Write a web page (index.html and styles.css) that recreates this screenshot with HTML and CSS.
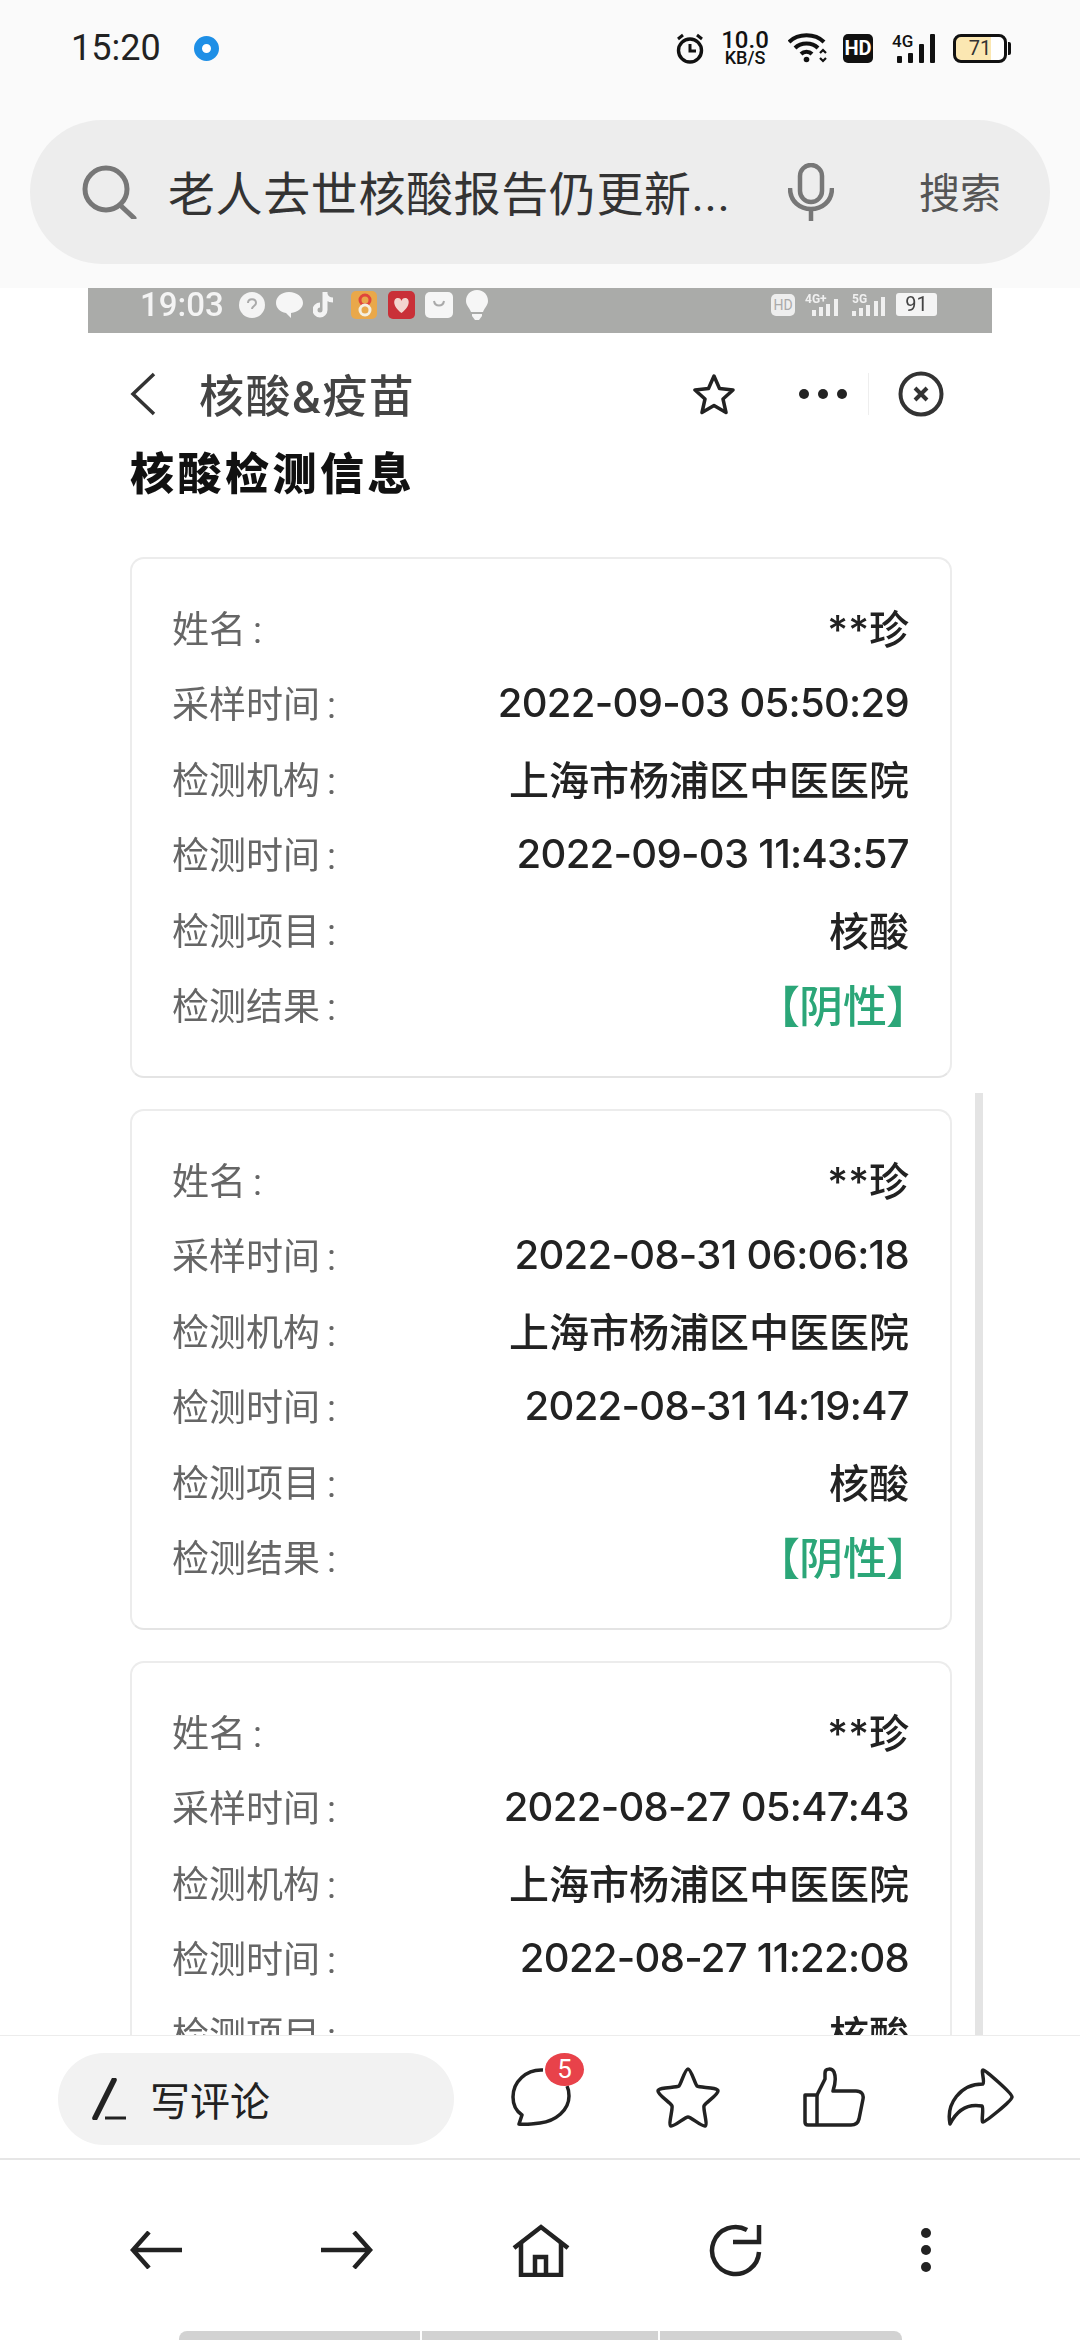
FILE: index.html
```html
<!DOCTYPE html>
<html lang="zh-CN">

<head>
    <meta charset="UTF-8">
    <meta name="viewport" content="width=device-width, initial-scale=1.0">
    <title>老人去世核酸报告仍更新</title>
    <link rel="stylesheet" href="styles.css">
</head>

<body>
    <div id="phone">
        <div class="top">
            <div class="status">
                <div class="status-left">
                    <span class="clock">15:20</span>
                    <span class="live-dot"></span>
                </div>
                <div class="status-right">
                    <svg class="ic-alarm" width="30" height="31" viewBox="0 0 30 31" fill="none" stroke="#111" stroke-width="3.4">
                        <circle cx="15" cy="17.500" r="11.500" />
                        <path d="M15 11v7h6" stroke-width="3" />
                        <path d="M3 6l5-4M27 6l-5-4" stroke-width="3" />
                    </svg>
                    <div class="speed"><b>10.0</b><span>KB/S</span></div>
                    <svg class="ic-wifi" width="40" height="30" viewBox="0 0 40 30" fill="none" stroke="#111" stroke-width="4">
                        <path d="M1 9C10 0 27 0 36 9" />
                        <path d="M7 15C13 9 24 9 30 15" />
                        <path d="M13 21C16 18 21 18 24 21" />
                        <circle cx="18.500" cy="26.500" r="2.800" fill="#111" stroke="none" />
                        <path d="M32 20l3-3 3 3M32 25l3 3 3-3" stroke-width="2.200" />
                    </svg>
                    <div class="hd">HD</div>
                    <div class="signal">
                        <span class="signal-4g">4G</span>
                        <svg width="38" height="29" viewBox="0 0 38 29" fill="#111">
                            <rect x="0" y="22" width="5" height="7" rx="1" />
                            <rect x="11" y="19" width="5" height="10" rx="1" />
                            <rect x="22" y="10" width="5" height="19" rx="1" />
                            <rect x="33" y="0" width="5" height="29" rx="1" />
                        </svg>
                    </div>
                    <div class="battery">
                        <div class="battery-body">71</div>
                        <div class="battery-nub"></div>
                    </div>
                </div>
            </div>
            <div class="searchbar">
                <svg class="ic-search" width="56" height="54" viewBox="0 0 56 54" fill="none" stroke="#777" stroke-width="5">
                    <circle cx="25" cy="24" r="21" />
                    <path d="M39 40l14 13" stroke-linecap="round" />
                </svg>
                <div class="search-text">老人去世核酸报告仍更新...</div>
                <svg class="ic-mic" width="46" height="58" viewBox="0 0 46 58" fill="none" stroke="#777" stroke-width="4.500">
                    <rect x="12" y="2" width="22" height="37" rx="11" />
                    <path d="M2 25C2 53 44 53 44 25" />
                    <path d="M23 45v13" />
                </svg>
                <div class="search-btn">搜索</div>
            </div>
        </div>

        <div class="content">
            <div class="shot">
                <div class="shot-status">
                    <span class="shot-time">19:03</span>
                    <div class="shot-icons">
                        <svg width="28" height="26" viewBox="0 0 28 26"><circle cx="14" cy="13" r="13" fill="#f4f4f4" /><path d="M10 11c0-5 8-5 8 0 0 3-4 3-4 6" fill="none" stroke="#aaa" stroke-width="2" /></svg>
                        <svg width="27" height="26" viewBox="0 0 27 26"><path d="M13 0C5 0 0 5 0 11c0 5 4 9 10 10l5 5v-5c7-1 12-5 12-10C27 5 21 0 13 0z" fill="#f6f6f6" /></svg>
                        <svg width="22" height="26" viewBox="0 0 22 26" fill="none" stroke="#f4f4f4" stroke-width="5"><path d="M12 0v18a5 5 0 1 1-5-5M12 2c1 4 4 6 8 6" /></svg>
                        <svg class="app-orange" width="26" height="28" viewBox="0 0 26 28"><rect width="26" height="28" rx="5" fill="#e9a84a" /><circle cx="14" cy="9" r="5" fill="none" stroke="#e0463c" stroke-width="3" /><circle cx="14" cy="19" r="5" fill="none" stroke="#f4efe0" stroke-width="3" /></svg>
                        <svg class="app-red" width="27" height="28" viewBox="0 0 27 28"><rect width="27" height="28" rx="5" fill="#c93038" /><path d="M13.500 22C4 15 5 7 10 7c2 0 3 1 3.500 3C14 8 15 7 17 7c5 0 6 8-3.500 15z" fill="#f3d5cf" /></svg>
                        <svg class="app-white" width="28" height="26" viewBox="0 0 28 26"><rect width="28" height="26" rx="5" fill="#f6f6f6" /><path d="M9 9c1 6 9 6 10 0" fill="none" stroke="#aaa" stroke-width="2" /></svg>
                        <svg class="app-bulb" width="22" height="30" viewBox="0 0 22 30"><path d="M11 0C4 0 0 5 0 11c0 4 3 6 5 11h12c2-5 5-7 5-11C22 5 18 0 11 0zM6 24h10v2l-3 4H9l-3-4z" fill="#f6f6f6" /></svg>
                    </div>
                    <div class="shot-right">
                        <div class="shot-hd">HD</div>
                        <svg width="37" height="24" viewBox="0 0 37 24" fill="#f0f0f0"><rect x="8" y="17" width="4" height="6" /><rect x="15" y="14" width="4" height="9" /><rect x="22" y="11" width="4" height="12" /><rect x="30" y="6" width="4" height="17" /><text x="1" y="10" font-size="12" font-weight="700">4G+</text></svg>
                        <svg width="37" height="24" viewBox="0 0 37 24" fill="#f0f0f0"><rect x="2" y="18" width="4" height="5" /><rect x="9" y="15" width="4" height="8" /><rect x="16" y="12" width="4" height="11" /><rect x="24" y="8" width="4" height="15" /><rect x="31" y="4" width="4" height="19" /><text x="2" y="10" font-size="12" font-weight="700">5G</text></svg>
                        <div class="shot-batt">91</div>
                    </div>
                </div>

                <div class="nav">
                    <svg class="nav-back" width="26" height="44" viewBox="0 0 26 44" fill="none" stroke="#333" stroke-width="3.500">
                        <path d="M24 2L3 22l21 20" />
                    </svg>
                    <div class="nav-title">核酸&amp;疫苗</div>
                    <svg class="nav-star" width="42" height="42" viewBox="0 0 42 42" fill="none" stroke="#222" stroke-width="3.500" stroke-linejoin="round">
                        <path d="M21 3l5.500 12.500 13.500 1.500-10 9 3 13.500-12-7-12 7 3-13.500-10-9 13.500-1.500z" />
                    </svg>
                    <svg class="nav-more" width="50" height="12" viewBox="0 0 50 12" fill="#222">
                        <circle cx="6" cy="6" r="5" /><circle cx="25" cy="6" r="5" /><circle cx="44" cy="6" r="5" />
                    </svg>
                    <div class="nav-sep"></div>
                    <svg class="nav-close" width="46" height="46" viewBox="0 0 46 46" fill="none" stroke="#333" stroke-width="4">
                        <circle cx="23" cy="23" r="20.500" />
                        <path d="M17 17l12 12M29 17L17 29" />
                    </svg>
                </div>

                <h2 class="page-title">核酸检测信息</h2>

                <div class="card">
                    <div class="row"><span class="label">姓名<i>:</i></span><span class="value">**珍</span></div>
                    <div class="row"><span class="label">采样时间<i>:</i></span><span class="value num">2022-09-03 05:50:29</span></div>
                    <div class="row"><span class="label">检测机构<i>:</i></span><span class="value">上海市杨浦区中医医院</span></div>
                    <div class="row"><span class="label">检测时间<i>:</i></span><span class="value num">2022-09-03 11:43:57</span></div>
                    <div class="row"><span class="label">检测项目<i>:</i></span><span class="value">核酸</span></div>
                    <div class="row"><span class="label">检测结果<i>:</i></span><span class="value negative">【阴性】</span></div>
                </div>

                <div class="card">
                    <div class="row"><span class="label">姓名<i>:</i></span><span class="value">**珍</span></div>
                    <div class="row"><span class="label">采样时间<i>:</i></span><span class="value num">2022-08-31 06:06:18</span></div>
                    <div class="row"><span class="label">检测机构<i>:</i></span><span class="value">上海市杨浦区中医医院</span></div>
                    <div class="row"><span class="label">检测时间<i>:</i></span><span class="value num">2022-08-31 14:19:47</span></div>
                    <div class="row"><span class="label">检测项目<i>:</i></span><span class="value">核酸</span></div>
                    <div class="row"><span class="label">检测结果<i>:</i></span><span class="value negative">【阴性】</span></div>
                </div>

                <div class="card">
                    <div class="row"><span class="label">姓名<i>:</i></span><span class="value">**珍</span></div>
                    <div class="row"><span class="label">采样时间<i>:</i></span><span class="value num">2022-08-27 05:47:43</span></div>
                    <div class="row"><span class="label">检测机构<i>:</i></span><span class="value">上海市杨浦区中医医院</span></div>
                    <div class="row"><span class="label">检测时间<i>:</i></span><span class="value num">2022-08-27 11:22:08</span></div>
                    <div class="row"><span class="label">检测项目<i>:</i></span><span class="value">核酸</span></div>
                    <div class="row"><span class="label">检测结果<i>:</i></span><span class="value negative">【阴性】</span></div>
                </div>

                <div class="shot-scroll"></div>
            </div>
        </div>

        <div class="commentbar">
            <div class="comment-input">
                <svg width="36" height="42" viewBox="0 0 36 42" fill="none" stroke="#222">
                    <path d="M22 2L3 40" stroke-width="5.500" stroke-linecap="round" />
                    <path d="M13 40h21" stroke-width="3" />
                </svg>
                <span>写评论</span>
            </div>
            <div class="comment-icon ic-comment">
                <svg width="60" height="58" viewBox="0 0 60 58" fill="none" stroke="#222" stroke-width="3.500" stroke-linejoin="round">
                    <path d="M32 2C15 1 2 14 2 29c0 7 3 14 9 18l-3 9c6 1 14 0 21-1 16-2 29-13 29-27 0-5-1-8-2-10" />
                </svg>
                <span class="badge">5</span>
            </div>
            <div class="comment-icon ic-fav">
                <svg width="64" height="62" viewBox="0 0 64 62" fill="none" stroke="#222" stroke-width="3.500" stroke-linejoin="round">
                    <path d="M32 3c3 0 7 15 9 17 3 2 21 1 21 5 0 4-13 12-14 15-1 3 4 19 1 20-3 1-14-9-17-9s-14 10-17 9c-3-1 2-17 1-20-1-3-14-11-14-15 0-4 18-3 21-5 2-2 6-17 9-17z" />
                </svg>
            </div>
            <div class="comment-icon ic-like">
                <svg width="62" height="60" viewBox="0 0 62 60" fill="none" stroke="#222" stroke-width="3.500" stroke-linejoin="round">
                    <path d="M2 28H14L22 12V6C22 1 29 1 31 5 33 10 32 18 30 24H53C58 24 61 27 60 32L56 52C55 56 53 58 48 58H5C3 58 2 57 2 55Z" />
                    <path d="M14 28V58" />
                </svg>
            </div>
            <div class="comment-icon ic-share">
                <svg width="68" height="58" viewBox="0 0 68 58" fill="none" stroke="#222" stroke-width="3.500" stroke-linejoin="round">
                    <path d="M37 2C39 2 66 25 66 29 66 33 39 54 37 54 35 54 38 40 36 38 20 35 10 44 4 56 0 36 14 16 37 16 39 15 35 2 37 2Z" />
                </svg>
            </div>
        </div>

        <div class="toolbar">
            <svg width="52" height="38" viewBox="0 0 52 38" fill="none" stroke="#222" stroke-width="4.500">
                <path d="M19 1L3 19l16 18M3 19h49" />
            </svg>
            <svg width="52" height="38" viewBox="0 0 52 38" fill="none" stroke="#222" stroke-width="4.500">
                <path d="M33 1l16 18-16 18M49 19H0" />
            </svg>
            <svg width="58" height="53" viewBox="0 0 58 53" fill="none" stroke="#222" stroke-width="4.500">
                <path d="M2 24L29 3l27 21" />
                <path d="M9 19v32h40V19" />
                <path d="M23 50V33h11v17" />
            </svg>
            <svg width="54" height="53" viewBox="0 0 54 53" fill="none" stroke="#222" stroke-width="4.500">
                <path d="M38 6A23.500 23.500 0 1 0 50 28" />
                <path d="M50 1v17H24" />
            </svg>
            <svg class="tb-more" width="12" height="46" viewBox="0 0 12 46" fill="#222">
                <circle cx="6" cy="6" r="5" /><circle cx="6" cy="23" r="5" /><circle cx="6" cy="40" r="5" />
            </svg>
        </div>

        <div class="handle">
            <div class="handle-bar"></div>
        </div>
    </div>
</body>

</html>
```

FILE: styles.css
```css
html,
body {
    margin: 0;
    padding: 0;
    background-color: #fff;
}

body {
    font-family: Roboto, "Noto Sans CJK SC", sans-serif;
    color: #222;
}

#phone {
    width: 1080px;
    height: 2340px;
    display: flex;
    flex-direction: column;
    overflow: hidden;
}

/* Status bar and search */
.top {
    height: 288px;
    flex: none;
    background-color: #fafafa;
}

.status {
    height: 96px;
    display: flex;
    align-items: center;
    justify-content: space-between;
    padding: 0 69px 0 71px;
}

.status-left {
    display: flex;
    align-items: center;
}

.clock {
    font-size: 36px;
    color: #222;
}

.live-dot {
    width: 9px;
    height: 9px;
    margin-left: 33px;
    border: 8px solid #1e8fe6;
    border-radius: 50%;
    background-color: #fff;
}

.status-right {
    display: flex;
    align-items: center;
}

.speed {
    margin-left: 16px;
    width: 48px;
    display: flex;
    flex-direction: column;
    align-items: center;
    color: #111;
}

.speed b {
    font-size: 24px;
    font-weight: 500;
    line-height: 20px;
}

.speed span {
    font-size: 18px;
    font-weight: 500;
    line-height: 16px;
}

.ic-wifi {
    margin-left: 19px;
}

.hd {
    width: 30px;
    height: 29px;
    margin-left: 15px;
    border-radius: 5px;
    background-color: #111;
    color: #fff;
    font-size: 20px;
    font-weight: 700;
    line-height: 29px;
    text-align: center;
}

.signal {
    position: relative;
    width: 43px;
    height: 29px;
    margin-left: 19px;
    display: flex;
    justify-content: flex-end;
}

.signal-4g {
    position: absolute;
    left: 0;
    top: -2px;
    font-size: 17px;
    font-weight: 500;
    line-height: 18px;
    color: #111;
}

.battery {
    display: flex;
    align-items: center;
    margin-left: 18px;
}

.battery-body {
    width: 48px;
    height: 23px;
    border: 3px solid #111;
    border-radius: 8px;
    background: linear-gradient(to right, #fbe7b2 72%, #fff 72%);
    font-size: 20px;
    line-height: 23px;
    text-align: center;
    color: #333;
}

.battery-nub {
    width: 3px;
    height: 13px;
    margin-left: 1px;
    border-radius: 0 2px 2px 0;
    background-color: #111;
}

.searchbar {
    height: 144px;
    margin: 24px 30px 0;
    display: flex;
    align-items: center;
    border-radius: 72px;
    background-color: #ededed;
}

.ic-search {
    margin-left: 51px;
    flex: none;
}

.search-text {
    margin: 0 0 4px 31px;
    width: 620px;
    flex: none;
    font-size: 47px;
    letter-spacing: 0.6px;
    color: #333;
    white-space: nowrap;
}

.search-btn {
    margin: 0 0 4px 85px;
    font-size: 41px;
    color: #555;
    white-space: nowrap;
}

/* The picture in the article */
.content {
    flex: 1;
    min-height: 0;
    overflow: hidden;
}

.shot {
    position: relative;
    width: 904px;
    height: 100%;
    margin-left: 88px;
    filter: blur(0.5px);
}

.shot-status {
    box-sizing: border-box;
    height: 45px;
    display: flex;
    align-items: center;
    padding: 0 0 12px 52px;
    background-color: #aaaba9;
    color: #f4f4f4;
}

.shot-time {
    width: 98px;
    font-size: 33px;
    font-weight: 500;
    line-height: 30px;
}

.shot-icons {
    display: flex;
    align-items: center;
    gap: 10px;
}

.app-orange {
    margin-left: 6px;
}

.app-red {
    margin-left: 1px;
}

.app-bulb {
    margin-left: 3px;
}

.shot-right {
    margin-left: auto;
    padding-right: 55px;
    display: flex;
    align-items: center;
    gap: 9px;
}

.shot-hd {
    width: 24px;
    height: 22px;
    border-radius: 5px;
    background-color: #eee;
    color: #aaa;
    font-size: 14px;
    line-height: 22px;
    text-align: center;
}

.shot-batt {
    width: 41px;
    height: 23px;
    border-radius: 3px;
    background-color: #f4f4f4;
    color: #444;
    font-size: 20px;
    line-height: 23px;
    text-align: center;
}

.nav {
    height: 122px;
    display: flex;
    align-items: center;
    padding: 0 48px 0 42px;
}

.nav-title {
    margin: 0 0 2px 43px;
    font-size: 45px;
    font-weight: 500;
    letter-spacing: 1.500px;
    color: #444;
    white-space: nowrap;
}

.nav-star {
    margin-left: auto;
    margin-right: -2px;
}

.nav-more {
    margin-left: 65px;
}

.nav-sep {
    width: 1px;
    height: 42px;
    margin-left: 20px;
    background-color: #eee;
}

.nav-close {
    margin-left: 29px;
}

.page-title {
    margin: 0 0 62px 42px;
    font-size: 44px;
    font-weight: 900;
    line-height: 40px;
    letter-spacing: 3.500px;
    color: #111;
}

.card {
    box-sizing: border-box;
    width: 822px;
    height: 521px;
    margin: 0 0 31px 42px;
    padding: 30px 41px 38px 42px;
    border: 2px solid #ececec;
    border-bottom-color: #e4e4e4;
    border-radius: 14px;
    background-color: #fff;
}

.row {
    height: 75.5px;
    display: flex;
    align-items: center;
    justify-content: space-between;
    margin-left: -2px;
}

.label {
    font-size: 37px;
    color: #666;
}

.label i {
    margin-left: 7px;
    font-style: normal;
}

.value {
    font-family: Inter, "Noto Sans CJK SC", sans-serif;
    font-size: 40px;
    font-weight: 500;
    color: #222;
    white-space: nowrap;
}

.num {
    letter-spacing: -0.7px;
}

.negative {
    font-size: 44px;
    font-feature-settings: "palt";
    color: #2ba678;
}

.shot-scroll {
    position: absolute;
    left: 887px;
    top: 805px;
    bottom: 0;
    width: 8px;
    background-color: #e4e4e4;
}

/* Comment bar */
.commentbar {
    position: relative;
    height: 125px;
    flex: none;
    box-sizing: border-box;
    border-top: 1px solid #ececec;
    border-bottom: 2px solid #e6e6e6;
    background-color: #fff;
    display: flex;
    align-items: center;
}

.comment-input {
    width: 396px;
    height: 92px;
    margin: 3px 0 0 58px;
    box-sizing: border-box;
    padding-left: 34px;
    display: flex;
    align-items: center;
    gap: 22px;
    border-radius: 46px;
    background-color: #f2f2f2;
    font-size: 40px;
    color: #222;
}

.comment-icon {
    position: relative;
    display: flex;
}

.ic-comment {
    margin-left: 57px;
}

.ic-fav {
    margin-left: 85px;
}

.ic-like {
    margin-left: 83px;
}

.ic-share {
    margin-left: 81px;
}

.badge {
    position: absolute;
    left: 34px;
    top: -15px;
    width: 39px;
    height: 33px;
    border-radius: 50%;
    background-color: #e8424a;
    color: #fff;
    font-size: 26px;
    line-height: 33px;
    text-align: center;
}

/* Browser toolbar */
.toolbar {
    height: 171px;
    flex: none;
    box-sizing: border-box;
    padding: 9px 0 0 130px;
    display: flex;
    align-items: center;
    gap: 139px;
    background-color: #fff;
}

.tb-more {
    margin-left: 18px;
}

.handle {
    height: 9px;
    flex: none;
    background-color: #fff;
    display: flex;
    justify-content: center;
}

.handle-bar {
    width: 723px;
    border-radius: 8px 8px 0 0;
    background: linear-gradient(to right, #d2d2d2 241px, #fff 241px, #fff 243px, #d2d2d2 243px, #d2d2d2 479px, #fff 479px, #fff 481px, #d2d2d2 481px);
}
```
